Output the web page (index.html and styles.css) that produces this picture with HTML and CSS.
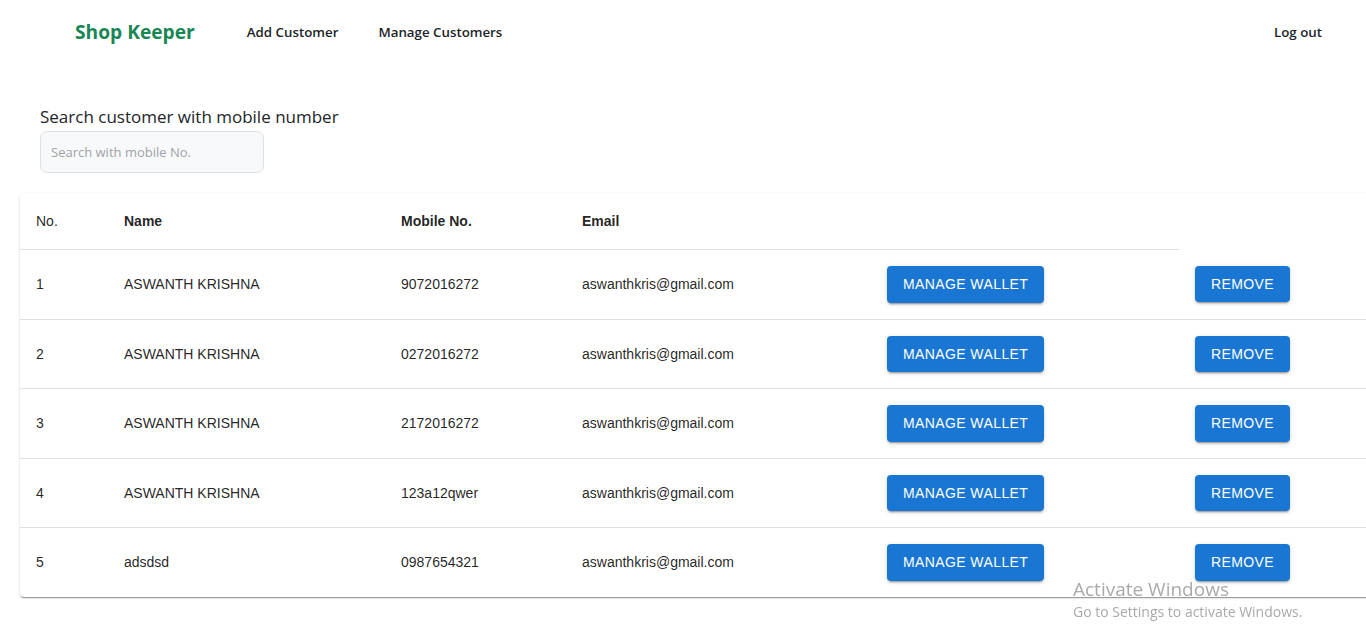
FILE: index.html
```html
<!DOCTYPE html>
<html lang="en">
<head>
<meta charset="utf-8">
<title>Shop Keeper</title>
<link rel="stylesheet" href="styles.css">
</head>
<body>
<nav class="navbar">
  <a class="brand" href="#">Shop Keeper</a>
  <ul class="nav-links">
    <li><a href="#">Add Customer</a></li>
    <li><a href="#">Manage Customers</a></li>
  </ul>
  <a class="logout" href="#">Log out</a>
</nav>

<main class="main">
  <section class="search">
    <label class="search-label" for="mobile">Search customer with mobile number</label>
    <input class="search-input" id="mobile" type="text" placeholder="Search with mobile No.">
  </section>

  <div class="paper">
    <table class="table">
      <colgroup>
        <col class="c1"><col class="c2"><col class="c3"><col class="c4"><col class="c5"><col class="c6">
      </colgroup>
      <thead>
        <tr>
          <th class="th-plain">No.</th>
          <th>Name</th>
          <th>Mobile No.</th>
          <th>Email</th>
          <th></th>
        </tr>
      </thead>
      <tbody>
        <tr>
          <td>1</td><td>ASWANTH KRISHNA</td><td>9072016272</td><td>aswanthkris@gmail.com</td>
          <td><button class="btn">Manage Wallet</button></td><td><button class="btn">Remove</button></td>
        </tr>
        <tr>
          <td>2</td><td>ASWANTH KRISHNA</td><td>0272016272</td><td>aswanthkris@gmail.com</td>
          <td><button class="btn">Manage Wallet</button></td><td><button class="btn">Remove</button></td>
        </tr>
        <tr>
          <td>3</td><td>ASWANTH KRISHNA</td><td>2172016272</td><td>aswanthkris@gmail.com</td>
          <td><button class="btn">Manage Wallet</button></td><td><button class="btn">Remove</button></td>
        </tr>
        <tr>
          <td>4</td><td>ASWANTH KRISHNA</td><td>123a12qwer</td><td>aswanthkris@gmail.com</td>
          <td><button class="btn">Manage Wallet</button></td><td><button class="btn">Remove</button></td>
        </tr>
        <tr class="last">
          <td>5</td><td>adsdsd</td><td>0987654321</td><td>aswanthkris@gmail.com</td>
          <td><button class="btn">Manage Wallet</button></td><td><button class="btn">Remove</button></td>
        </tr>
      </tbody>
    </table>
  </div>
</main>

<div class="watermark">
  <div class="wm-title">Activate Windows</div>
  <div class="wm-sub">Go to Settings to activate Windows.</div>
</div>
</body>
</html>
```

FILE: styles.css
```css
html, body {
  margin: 0;
  padding: 0;
  background: #fff;
}

body {
  font-family: "Open Sans", "Noto Sans", sans-serif;
  color: #212529;
}

a {
  text-decoration: none;
}

.navbar {
  display: flex;
  align-items: center;
  height: 63px;
  padding: 0 44px 0 75px;
}

.brand {
  font-size: 19.2px;
  font-weight: 700;
  color: #198754;
  margin-right: 32px;
}

.nav-links {
  display: flex;
  list-style: none;
  margin: 0;
  padding: 0;
  flex: 1;
}

.nav-links a,
.logout {
  display: block;
  font-size: 13.3px;
  font-weight: 600;
  color: #212529;
  padding: 8px 20px;
}

.logout {
  padding: 8px 0;
}

.main {
  overflow: hidden;
  padding-bottom: 8px;
}

.search {
  padding: 42px 0 0 40px;
}

.search-label {
  display: block;
  font-size: 17px;
  line-height: 24px;
  color: #212529;
  margin-bottom: 2px;
}

.search-input {
  box-sizing: border-box;
  width: 224px;
  height: 42px;
  border: 1px solid #dee2e6;
  border-radius: 7px;
  background: #f8f9fa;
  padding: 0 10px;
  font-family: "Open Sans", sans-serif;
  font-size: 13px;
  color: #212529;
  outline: none;
}

.search-input::placeholder {
  color: #9ea3a8;
}

.paper {
  margin: 20px 0 0 20px;
  width: 1500px;
  background: #fff;
  border-radius: 4px;
  box-shadow: 0 2px 1px -1px rgba(0,0,0,0.25), 0 1px 1px 0 rgba(0,0,0,0.16), 0 1px 3px 0 rgba(0,0,0,0.12);
}

.table {
  width: 100%;
  border-collapse: collapse;
  table-layout: fixed;
  font-family: "Liberation Sans", Arial, sans-serif;
  font-size: 14px;
  color: rgba(0,0,0,0.87);
}

.c1 { width: 88px; }
.c2 { width: 277px; }
.c3 { width: 181px; }
.c4 { width: 305px; }
.c5 { width: 308px; }
.c6 { width: 341px; }

.table th {
  text-align: left;
  font-weight: 700;
  line-height: 24px;
  padding: 16px;
  border-bottom: 1px solid #e0e0e0;
}

.table th.th-plain {
  font-weight: 400;
}

.table td {
  padding: 16px;
  line-height: 20px;
  border-bottom: 1px solid #e0e0e0;
  vertical-align: middle;
}

.table tr.last td {
  border-bottom: none;
}

.btn {
  font-family: "Liberation Sans", Arial, sans-serif;
  font-size: 14px;
  font-weight: 500;
  line-height: 24.5px;
  letter-spacing: 0.4px;
  text-transform: uppercase;
  color: #fff;
  background: #1976d2;
  border: none;
  border-radius: 4px;
  padding: 6px 16px;
  box-shadow: 0 3px 1px -2px rgba(0,0,0,0.2), 0 2px 2px 0 rgba(0,0,0,0.14), 0 1px 5px 0 rgba(0,0,0,0.12);
  cursor: pointer;
  display: block;
}

.watermark {
  position: fixed;
  left: 1073px;
  top: 576px;
  color: rgba(140,140,140,0.75);
  font-family: "Open Sans", "Noto Sans", sans-serif;
  pointer-events: none;
}

.wm-title {
  font-size: 19px;
  line-height: 26px;
}

.wm-sub {
  font-size: 14px;
  line-height: 20px;
}
```
